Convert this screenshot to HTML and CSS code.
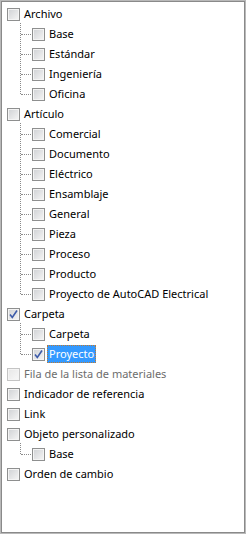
FILE: index.html
```html
<!DOCTYPE html>
<html lang="es">
<head>
<meta charset="UTF-8">
<meta name="viewport" content="width=device-width, initial-scale=1.0">
<title>Categorías</title>
<link rel="stylesheet" href="styles.css">
</head>
<body>

<!-- Árbol de categorías -->
<div class="tree">
    <ul class="level">
        <li class="node">
            <div class="row"><span class="box"></span><span class="label">Archivo</span></div>
            <ul class="children">
                <li class="child"><div class="row"><span class="box"></span><span class="label">Base</span></div></li>
                <li class="child"><div class="row"><span class="box"></span><span class="label">Estándar</span></div></li>
                <li class="child"><div class="row"><span class="box"></span><span class="label">Ingeniería</span></div></li>
                <li class="child"><div class="row"><span class="box"></span><span class="label">Oficina</span></div></li>
            </ul>
        </li>
        <li class="node">
            <div class="row"><span class="box"></span><span class="label">Artículo</span></div>
            <ul class="children">
                <li class="child"><div class="row"><span class="box"></span><span class="label">Comercial</span></div></li>
                <li class="child"><div class="row"><span class="box"></span><span class="label">Documento</span></div></li>
                <li class="child"><div class="row"><span class="box"></span><span class="label">Eléctrico</span></div></li>
                <li class="child"><div class="row"><span class="box"></span><span class="label">Ensamblaje</span></div></li>
                <li class="child"><div class="row"><span class="box"></span><span class="label">General</span></div></li>
                <li class="child"><div class="row"><span class="box"></span><span class="label">Pieza</span></div></li>
                <li class="child"><div class="row"><span class="box"></span><span class="label">Proceso</span></div></li>
                <li class="child"><div class="row"><span class="box"></span><span class="label">Producto</span></div></li>
                <li class="child"><div class="row"><span class="box"></span><span class="label">Proyecto de AutoCAD Electrical</span></div></li>
            </ul>
        </li>
        <li class="node">
            <div class="row"><span class="box checked"><svg viewBox="0 0 11 11" width="11" height="11"><path d="M2 5.5 L4.3 8.5 L9 1.5" fill="none" stroke="#3d5ba9" stroke-width="1.6"/></svg></span><span class="label">Carpeta</span></div>
            <ul class="children">
                <li class="child"><div class="row"><span class="box"></span><span class="label">Carpeta</span></div></li>
                <li class="child"><div class="row"><span class="box checked"><svg viewBox="0 0 11 11" width="11" height="11"><path d="M2 5.5 L4.3 8.5 L9 1.5" fill="none" stroke="#3d5ba9" stroke-width="1.6"/></svg></span><span class="label selected">Proyecto</span></div></li>
            </ul>
        </li>
        <li class="node">
            <div class="row disabled"><span class="box"></span><span class="label">Fila de la lista de materiales</span></div>
        </li>
        <li class="node">
            <div class="row"><span class="box"></span><span class="label">Indicador de referencia</span></div>
        </li>
        <li class="node">
            <div class="row"><span class="box"></span><span class="label">Link</span></div>
        </li>
        <li class="node">
            <div class="row"><span class="box"></span><span class="label">Objeto personalizado</span></div>
            <ul class="children">
                <li class="child"><div class="row"><span class="box"></span><span class="label">Base</span></div></li>
            </ul>
        </li>
        <li class="node">
            <div class="row"><span class="box"></span><span class="label">Orden de cambio</span></div>
        </li>
    </ul>
</div>

</body>
</html>
```

FILE: styles.css
```css
html, body {
    margin: 0;
    padding: 0;
    background-color: #fff;
}

body {
    font-family: "Noto Sans", "Open Sans", sans-serif;
    font-size: 11px;
    color: #000;
}

/* Contenedor del árbol */
.tree {
    width: 246px;
    height: 534px;
    box-sizing: border-box;
    border: 1px solid #b9b9b9;
    box-shadow: inset 0 0 0 1px #8a8a8a;
    padding: 3px 2px 0 6px;
    overflow: hidden;
    background-color: #fff;
}

.tree ul {
    list-style: none;
    margin: 0;
    padding: 0;
}

.row {
    height: 20px;
    display: flex;
    align-items: center;
    white-space: nowrap;
}

/* Casillas */
.box {
    flex: none;
    width: 13px;
    height: 13px;
    box-sizing: border-box;
    border: 1px solid #8e8f8f;
    box-shadow: inset 0 0 0 1px #f4f4f4;
    background: linear-gradient(135deg, #cfd1d4, #f6f6f6);
    display: flex;
    align-items: center;
    justify-content: center;
    margin-right: 3px;
}

.label {
    line-height: 16px;
    padding: 0 1px;
}

.label.selected {
    background-color: #3399ff;
    color: #fff;
    outline: 1px dotted #c07a30;
    outline-offset: -1px;
    padding: 1px 2px;
    margin-left: -1px;
}

.row.disabled {
    color: #6d6d6d;
}

.row.disabled .box {
    border-color: #c4c4c4;
    background: linear-gradient(135deg, #e6e6e6, #f8f8f8);
}

/* Hijos con líneas de conexión */
.tree .children {
    margin-left: 25px;
}

.child {
    position: relative;
}

.child::before {
    content: "";
    position: absolute;
    left: -12px;
    top: -1px;
    bottom: 0;
    border-left: 1px dotted #8a8a8a;
}

.child:last-child::before {
    bottom: auto;
    height: 11px;
}

.child::after {
    content: "";
    position: absolute;
    left: -11px;
    top: 10px;
    width: 10px;
    border-top: 1px dotted #8a8a8a;
}
```
